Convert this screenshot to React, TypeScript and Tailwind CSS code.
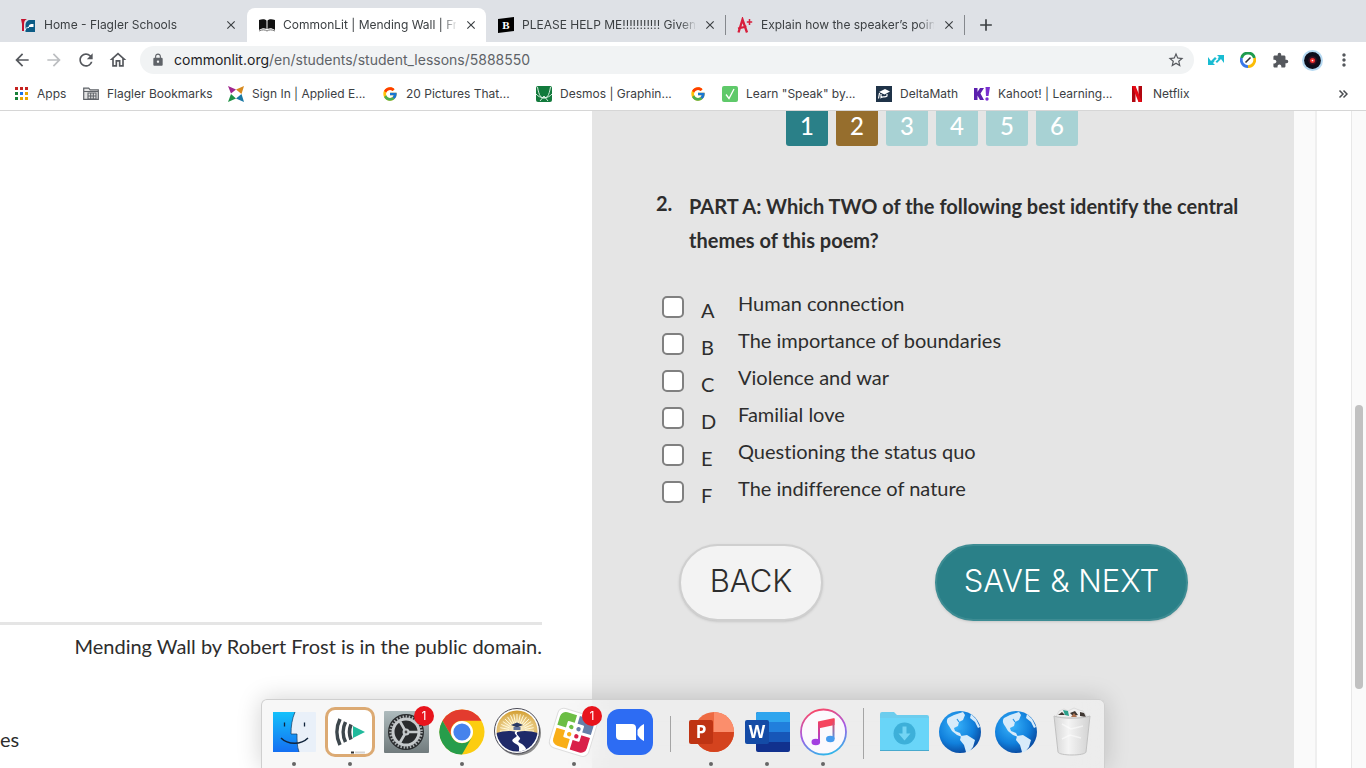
import { ReactNode, useState } from "react";
import {
  MdAdd,
  MdArrowBack,
  MdArrowForward,
  MdClose,
  MdExtension,
  MdLock,
  MdMoreVert,
  MdOutlineHome,
  MdRefresh,
  MdStarBorder,
} from "react-icons/md";
import { FcGoogle } from "react-icons/fc";

interface TabItem {
  title: string;
  icon: ReactNode;
  active?: boolean;
  divider?: boolean;
}

interface BookmarkItem {
  label: string;
  icon: ReactNode;
  width: string;
}

interface DockItem {
  label: string;
  icon: ReactNode;
  running?: boolean;
  badge?: string;
}

/* ---------- small icons ---------- */

const FlaglerIcon = () => (
  <svg viewBox="0 0 16 16" className="size-4 shrink-0">
    <path d="M1 2h6C4.500 3 4 5 4 8v6H2V7z" fill="#c4122f" />
    <path d="M5.500 15V8c0-3 2-5 5-5H15v12z" fill="#0d5c86" />
    <path d="M8.500 10C9 7.500 10 7 13.500 7v3z" fill="#fff" />
    <path d="M5 13c.5-2 2-2.500 4-2.500" fill="none" stroke="#fff" />
  </svg>
);

const BookIcon = () => (
  <svg viewBox="0 0 16 16" className="size-4 shrink-0">
    <path d="M0 13V3c3-1 6-1 7.500.5V12C5.500 11 3 11 0 13zM16 13V3c-3-1-6-1-7.500.5V12c2-1 4.500-1 7.500 1z" fill="#111" />
    <path d="M0 14c3-1.500 6-1.500 8 0 2-1.500 5-1.500 8 0" fill="none" stroke="#777" />
  </svg>
);

const BrainlyIcon = () => (
  <svg viewBox="0 0 16 16" className="size-4 shrink-0">
    <path d="M0 2l16-2v14L0 16z" fill="#000" />
    <text x="8" y="12" textAnchor="middle" fontSize="11" fontWeight="900" fontFamily="Liberation Serif, serif" fill="#fff">
      B
    </text>
  </svg>
);

const GradeIcon = () => (
  <svg viewBox="0 0 16 16" className="size-4 shrink-0">
    <path d="M1.500 15.500L5.500 2.500l4.500 13M1 11.500l8.500-2" fill="none" stroke="#d81f3c" strokeWidth="2.300" />
    <path d="M12.500 2v6M9.800 5h5.400" stroke="#d81f3c" strokeWidth="1.500" />
  </svg>
);

const APP_COLORS = ["#c5221f", "#c5221f", "#c5221f", "#188038", "#1a73e8", "#e8a600", "#188038", "#e8a600", "#e8a600"];

const AppsIcon = () => (
  <svg viewBox="0 0 16 16" className="size-4 shrink-0">
    {APP_COLORS.map((color, i) => (
      <rect key={i} x={2 + (i % 3) * 5} y={1 + Math.floor(i / 3) * 5} width="3" height="3" fill={color} />
    ))}
  </svg>
);

const FolderGridIcon = () => (
  <svg viewBox="0 0 16 16" className="size-4 shrink-0">
    <path d="M.7 13.300V2.200h5l1.500 1.600h8.100v9.500z" fill="#e4e4e4" stroke="#5f6368" strokeWidth="1.200" />
    <path d="M1 5.500h14" stroke="#5f6368" />
    <path d="M5 7h8v6H5zM5 10h8M7.700 7v6M10.300 7v6" fill="none" stroke="#5f6368" strokeWidth="1.100" />
  </svg>
);

const SignInIcon = () => (
  <svg viewBox="0 0 16 16" className="size-4 shrink-0">
    <path d="M0 0l8 3.500-5 4z" fill="#a0268f" />
    <path d="M16 0l-2.500 8L8 3.500z" fill="#d78a1f" />
    <path d="M0 16l3-8 5 4.500z" fill="#1e9245" />
    <path d="M16 16l-8-3.500 5.500-4.500z" fill="#1978a5" />
  </svg>
);

const DesmosIcon = () => (
  <svg viewBox="0 0 16 16" className="size-4 shrink-0">
    <rect width="16" height="16" rx="2" fill="#127a3c" />
    <path d="M1.500 1c1.500 9 3.500 11 6.500 11s5-2 6.500-11M0 8c4 5 12 5 16 0M4 15l4-5 4 5" fill="none" stroke="#e9f6ee" strokeWidth=".9" />
  </svg>
);

const CheckIcon = () => (
  <svg viewBox="0 0 16 16" className="size-4 shrink-0">
    <rect width="16" height="16" rx="2" fill="#5fc96a" />
    <path d="M4 8.500l3 4L12 3" fill="none" stroke="#fff" strokeWidth="1.300" />
  </svg>
);

const DeltaIcon = () => (
  <svg viewBox="0 0 16 16" className="size-4 shrink-0">
    <rect width="16" height="16" fill="#1f3348" />
    <path d="M3 6l6-3 5 2.500-5.500 3z" fill="#fff" />
    <path d="M5 8v3.500c2-1.500 4 .5 6-1.500V8M3.500 7L2.500 12.500" fill="none" stroke="#fff" strokeWidth="1.200" />
  </svg>
);

const KahootIcon = () => (
  <svg viewBox="0 0 16 16" className="size-4 shrink-0">
    <path d="M0 2h3.500v4L6 2h4L6.500 7.500 10 14H6L3.500 9.500V14H0z" fill="#5b1fae" />
    <path d="M11.500 1H16l-1.500 9H12z" fill="#7a2fd0" />
    <circle cx="13" cy="13" r="1.700" fill="#7a2fd0" />
  </svg>
);

const NetflixIcon = () => (
  <svg viewBox="0 0 16 16" className="size-4 shrink-0">
    <path d="M3 0h3.500v16H3zM9.500 0H13v16H9.500z" fill="#b1060f" />
    <path d="M3 0h3.500L13 16H9.500z" fill="#e50914" />
  </svg>
);

const ArrowsIcon = () => (
  <svg viewBox="0 0 16 16" className="size-4">
    <path d="M0 5v8h7l-2-2 4-4-2-2-4 4zM16 11V3H9l2 2-4 4 2 2 4-4z" fill="#19bcd2" />
    <path d="M6.500 9.500l3.500-3" stroke="#fff" strokeWidth="1.600" />
  </svg>
);

const MeterIcon = () => (
  <svg viewBox="0 0 16 16" className="size-4">
    <g fill="none" strokeWidth="2.800">
      <path d="M1.600 6A6.600 6.600 0 0 1 14.400 6" stroke="#1e9b4e" />
      <path d="M14.400 6A6.600 6.600 0 0 1 8 14.600" stroke="#fbbc05" />
      <path d="M8 14.600A6.600 6.600 0 0 1 1.600 6" stroke="#3b78e7" />
    </g>
    <path d="M5.500 10.500l5-5" stroke="#333" strokeWidth="1.600" />
  </svg>
);

const AvatarIcon = () => (
  <svg viewBox="0 0 20 20" className="size-[21px]">
    <circle cx="10" cy="10" r="10" fill="#b5d9f2" />
    <circle cx="10" cy="10" r="8" fill="#0c0d1b" />
    <circle cx="10" cy="10" r="4" fill="#3a1022" />
    <circle cx="10" cy="10" r="2.400" fill="#f0302f" />
    <circle cx="10" cy="10" r=".8" fill="#fff" />
  </svg>
);

const ChevronsIcon = () => (
  <svg viewBox="0 0 10 10" className="size-[10px]">
    <path d="M1.500 1.500L5 5 1.500 8.500M5.500 1.500L9 5 5.500 8.500" fill="none" stroke="#4a4d51" strokeWidth="1.500" />
  </svg>
);

/* ---------- dock icons ---------- */

const dockSvg = "size-12 overflow-visible";

const FinderIcon = () => (
  <svg viewBox="0 0 48 48" className={dockSvg}>
    <defs>
      <linearGradient id="finder" x1="0" y1="0" x2="0" y2="1">
        <stop offset="0" stopColor="#14c1fb" />
        <stop offset="1" stopColor="#146ff2" />
      </linearGradient>
    </defs>
    <rect x="3" y="4" width="43" height="40" rx="1" fill="#e9f0f9" />
    <path d="M3 4h22c-3 7-4 14-4 22h6c0 7 0 12 2 18H3z" fill="url(#finder)" />
    <path d="M25 4c-3 7-4 14-4 22h6c0 7 0 12 2 18" fill="none" stroke="#143b62" strokeWidth=".7" />
    <path d="M14.500 14.500v4M34.500 14.500v4" stroke="#10243c" strokeWidth="1.300" />
    <path d="M11 30c7 7 20 7 27 0" fill="none" stroke="#10243c" strokeWidth="1.500" />
  </svg>
);

const CastIcon = () => (
  <svg viewBox="0 0 48 48" className={dockSvg}>
    <rect x="-1" y="-1" width="50" height="50" rx="10" fill="#dcaa73" />
    <rect x="2" y="2" width="44" height="44" rx="7" fill="#fff" />
    <g fill="none" stroke="#3d474d" strokeWidth="3.600">
      <path d="M14 11c-4 8-4 18 0 26" />
      <path d="M19.500 14c-3 6-3 14 0 20" />
      <path d="M25 16.500c-2 5-2 10 0 15" />
    </g>
    <path d="M27 18l12 6-12 6z" fill="#20ba9c" />
    <path d="M25 44.500h3" stroke="#333" strokeWidth="2" />
    <path d="M29 44.500h10" stroke="#d5d5d5" strokeWidth="2" />
  </svg>
);

const SettingsIcon = () => (
  <svg viewBox="0 0 48 48" className={dockSvg}>
    <defs>
      <linearGradient id="steel" x1="0" y1="0" x2="0" y2="1">
        <stop offset="0" stopColor="#aebbbd" />
        <stop offset="1" stopColor="#717b7d" />
      </linearGradient>
    </defs>
    <rect x="2" y="3" width="45" height="42" rx="1" fill="url(#steel)" />
    <circle cx="24" cy="24" r="18" fill="#292b2d" />
    <circle cx="24" cy="24" r="15.500" fill="none" stroke="#aaafb1" strokeWidth="2.500" strokeDasharray="1.500 1.640" />
    <circle cx="24" cy="24" r="13" fill="none" stroke="#c5c9cb" strokeWidth="3" />
    <path d="M24 24h12M24 24l-6-10.500M24 24l-6 10.500" stroke="#c5c9cb" strokeWidth="2.600" />
    <circle cx="24" cy="24" r="3.500" fill="#c5c9cb" />
    <circle cx="24" cy="24" r="1.400" fill="#444" />
  </svg>
);

const ChromeIcon = () => (
  <svg viewBox="0 0 48 48" className={dockSvg}>
    <circle cx="24" cy="24" r="22.500" fill="#fccd10" />
    <path d="M4.500 12.700A22.500 22.500 0 0 1 43.500 12.700H24a11.300 11.300 0 0 0-9.800 17z" fill="#e33b2e" />
    <path d="M4.500 12.700A22.500 22.500 0 0 0 24 46.500l9.800-16.900a11.300 11.300 0 0 1-19.600 0z" fill="#279d4b" />
    <circle cx="24" cy="24" r="11" fill="#fff" />
    <circle cx="24" cy="24" r="8.600" fill="#4683ec" />
  </svg>
);

const SUN_RAYS = Array.from({ length: 17 }, (_, i) => (Math.PI * i) / 16);

const SchoolIcon = () => (
  <svg viewBox="0 0 48 48" className={dockSvg}>
    <defs>
      <clipPath id="school">
        <circle cx="23" cy="23" r="20.500" />
      </clipPath>
      <radialGradient id="sun" cx=".5" cy=".75" r=".8">
        <stop offset="0" stopColor="#fff9df" />
        <stop offset="1" stopColor="#cd9219" />
      </radialGradient>
    </defs>
    <circle cx="24.500" cy="25" r="22.500" fill="#444" opacity=".6" />
    <circle cx="23" cy="23" r="22.500" fill="#fff" stroke="#4a4a55" />
    <g clipPath="url(#school)">
      <rect x="2" y="2" width="42" height="25" fill="url(#sun)" />
      {SUN_RAYS.map((a, i) => (
        <line key={i} x1={23 + Math.cos(a) * 8} y1={23 - Math.sin(a) * 8} x2={23 + Math.cos(a) * 17} y2={23 - Math.sin(a) * 17} stroke="#fff8d8" />
      ))}
      <path d="M2 25c8-2 13-3 21-1 7-2 14-1 21 1v21H2z" fill="#1f2a69" />
      <path d="M22 23c-4 3 3 4 0 6-5 3-5 4 0 7 4 2 3 4 3 8h8c-1-5-3-7-7-9-4-2 1-3 0-5-2-3-5-4-2-7z" fill="#fff" />
    </g>
    <path d="M17 17l6-2.500 6 2.500-6 2.500z" fill="#2a3a64" />
    <path d="M19.500 19v3h7v-3" fill="#60729b" />
  </svg>
);

const CleverIcon = () => (
  <svg viewBox="0 0 48 48" className={dockSvg}>
    <g transform="rotate(17 24 24)">
      <rect x="3" y="4" width="41" height="41" rx="6" fill="#fff" stroke="#dedede" />
      <path d="M12 7h10v15H6v-9a6 6 0 0 1 6-6z" fill="#6cbe45" />
      <path d="M25 7h10a6 6 0 0 1 6 6v9H25z" fill="#667fa9" />
      <path d="M6 25h16v17H12a6 6 0 0 1-6-6z" fill="#f9ae17" />
      <path d="M25 25h16v11a6 6 0 0 1-6 6H25z" fill="#d92049" />
      <rect x="15" y="15" width="17" height="17" rx="1" fill="#fff" />
      <circle cx="20" cy="20" r="2.200" fill="#6cbe45" />
      <circle cx="27.500" cy="20" r="2.200" fill="#667fa9" />
      <circle cx="20" cy="27.500" r="2.200" fill="#f9ae17" />
      <circle cx="27.500" cy="27.500" r="2.200" fill="#d92049" />
    </g>
  </svg>
);

const ZoomIcon = () => (
  <svg viewBox="0 0 48 48" className={dockSvg}>
    <rect x="1" y="1" width="46" height="46" rx="12" fill="#2d6cf3" />
    <path d="M10 16h16a4 4 0 0 1 4 4v12H14a4 4 0 0 1-4-4zM31.500 22c2-3 4-5 6.500-6v17c-2.500-1-4.500-3-6.500-6z" fill="#fff" />
  </svg>
);

const PowerPointIcon = () => (
  <svg viewBox="0 0 48 48" className={dockSvg}>
    <circle cx="27" cy="24" r="20" fill="#ee6a42" />
    <path d="M27 4a20 20 0 0 1 20 20H27z" fill="#fb8e6c" />
    <path d="M7 24h40a20 20 0 0 1-40 0z" fill="#d4431e" />
    <rect x="2" y="12" width="24" height="24" rx="2" fill="#bf3413" />
    <text x="14" y="30" textAnchor="middle" fontSize="17" fontWeight="700" fontFamily="Open Sans, sans-serif" fill="#fff">
      P
    </text>
  </svg>
);

const WordIcon = () => (
  <svg viewBox="0 0 48 48" className={dockSvg}>
    <rect x="13" y="4" width="34" height="40" rx="2" fill="#11318e" />
    <path d="M15 4h30a2 2 0 0 1 2 2v8H13V6a2 2 0 0 1 2-2z" fill="#2fa5ee" />
    <path d="M13 14h34v10H13z" fill="#217fdc" />
    <path d="M13 24h34v10H13z" fill="#1757b8" />
    <rect x="2" y="12" width="24" height="24" rx="2" fill="#144ba6" />
    <text x="14" y="30" textAnchor="middle" fontSize="17" fontWeight="700" fontFamily="Open Sans, sans-serif" fill="#fff">
      W
    </text>
  </svg>
);

const MusicIcon = () => (
  <svg viewBox="0 0 48 48" className={dockSvg}>
    <defs>
      <linearGradient id="ring" x1=".3" y1="0" x2=".6" y2="1">
        <stop offset="0" stopColor="#fb4866" />
        <stop offset=".5" stopColor="#a45ae6" />
        <stop offset="1" stopColor="#31b5e9" />
      </linearGradient>
      <linearGradient id="stemLeft" gradientUnits="userSpaceOnUse" x1="0" y1="12" x2="0" y2="34">
        <stop offset="0" stopColor="#f74059" />
        <stop offset="1" stopColor="#a33fe0" />
      </linearGradient>
      <linearGradient id="stemRight" gradientUnits="userSpaceOnUse" x1="0" y1="12" x2="0" y2="32">
        <stop offset="0" stopColor="#f74059" />
        <stop offset="1" stopColor="#469bee" />
      </linearGradient>
    </defs>
    <circle cx="24.500" cy="24" r="22.500" fill="#fbf9fd" stroke="url(#ring)" strokeWidth="1.800" />
    <path d="M19 13.500L35.500 10v7L19 20.500z" fill="#f5455e" />
    <path d="M19 14h2v20h-2z" fill="url(#stemLeft)" />
    <path d="M33.500 11h2v20h-2z" fill="url(#stemRight)" />
    <ellipse cx="16.800" cy="34" rx="4.300" ry="3.200" fill="#a33fe0" />
    <ellipse cx="31.300" cy="31" rx="4.300" ry="3.200" fill="#469bee" />
  </svg>
);

const DownloadsIcon = () => (
  <svg viewBox="0 0 48 48" className={dockSvg}>
    <path d="M0 6a2 2 0 0 1 2-2h12l3 3h30a2 2 0 0 1 2 2v33H0z" fill="#6ccdee" />
    <path d="M0 10h49v31a2 2 0 0 1-2 2H2a2 2 0 0 1-2-2z" fill="#69d5f8" />
    <path d="M0 42.500h49" stroke="#48a9cd" />
    <circle cx="24.500" cy="25.500" r="11" fill="#3db0d9" />
    <path d="M24.500 18.500v8" stroke="#73d5f4" strokeWidth="4" />
    <path d="M18.500 25.500h12l-6 7z" fill="#73d5f4" />
  </svg>
);

const GlobeIcon = () => (
  <svg viewBox="0 0 48 48" className={dockSvg}>
    <defs>
      <radialGradient id="ocean" cx=".4" cy=".35" r=".65">
        <stop offset="0" stopColor="#39b4fb" />
        <stop offset=".65" stopColor="#1180dc" />
        <stop offset="1" stopColor="#0a4fa6" />
      </radialGradient>
    </defs>
    <circle cx="24" cy="24" r="21" fill="url(#ocean)" />
    <g fill="#d7ebfa">
      <path d="M12 10l6-3 9-3 2 3-2 5-4 2-1 4-4 2 1 3 5 2 2 4-5-2-5-4-3-5c-2-3-3-5-1-8z" />
      <path d="M25 28l6-1 8 5-2 7-4 5h-3l-2-7-4-5z" />
      <path d="M35 6l5 5 4 8-2 1-3-6-5-4z" />
    </g>
    <path d="M21 11l2 3M22 23h4" stroke="#2595e9" strokeWidth="1.200" />
  </svg>
);

const TrashIcon = () => (
  <svg viewBox="0 0 48 48" className={dockSvg}>
    <defs>
      <linearGradient id="bin" x1="0" y1="0" x2="1" y2="0">
        <stop offset="0" stopColor="#d6d6d6" />
        <stop offset=".4" stopColor="#f4f4f4" />
        <stop offset="1" stopColor="#d2d2d2" />
      </linearGradient>
    </defs>
    <path d="M8 9l3-6 5-2 4 2 6-3 5 2 4 1 5 7z" fill="#efefef" stroke="#c8c8c8" strokeWidth=".5" />
    <path d="M10 7l4-3 3 3zM22 5l5-2 3 4-5 1zM32 4l4 1 2 4-6-1z" fill="#3f3732" />
    <path d="M15 2l5 1 1 5-4-1z" fill="#2aa18b" />
    <path d="M26 5l3 4h-6zM35 4l2 4" fill="#ae7452" />
    <path d="M6 8c8 3 28 3 36 0l-4 36c-1 4-27 4-28 0z" fill="url(#bin)" stroke="#c0c0c0" />
    <path d="M14 16l9 5 12-3M14 31l8-4 11 3" fill="none" stroke="#fff" strokeWidth="1.500" opacity=".5" />
  </svg>
);

/* ---------- data ---------- */

const tabs: TabItem[] = [
  { title: "Home - Flagler Schools", icon: <FlaglerIcon /> },
  { title: "CommonLit | Mending Wall | Fr", icon: <BookIcon />, active: true },
  { title: "PLEASE HELP ME!!!!!!!!!!! Given", icon: <BrainlyIcon />, divider: true },
  { title: "Explain how the speaker’s poin", icon: <GradeIcon />, divider: true },
];

const bookmarks: BookmarkItem[] = [
  { label: "Apps", icon: <AppsIcon />, width: "w-[54px]" },
  { label: "Flagler Bookmarks", icon: <FolderGridIcon />, width: "w-[129px]" },
  { label: "Sign In | Applied E...", icon: <SignInIcon />, width: "w-[138px]" },
  { label: "20 Pictures That...", icon: <FcGoogle className="size-4 shrink-0" />, width: "w-[138px]" },
  { label: "Desmos | Graphin...", icon: <DesmosIcon />, width: "w-[138px]" },
  { label: "", icon: <FcGoogle className="size-4 shrink-0" />, width: "w-4" },
  { label: 'Learn "Speak" by...', icon: <CheckIcon />, width: "w-[138px]" },
  { label: "DeltaMath", icon: <DeltaIcon />, width: "w-[82px]" },
  { label: "Kahoot! | Learning...", icon: <KahootIcon />, width: "w-[139px]" },
  { label: "Netflix", icon: <NetflixIcon />, width: "w-[62px]" },
];

const answers = [
  { letter: "A", text: "Human connection" },
  { letter: "B", text: "The importance of boundaries" },
  { letter: "C", text: "Violence and war" },
  { letter: "D", text: "Familial love" },
  { letter: "E", text: "Questioning the status quo" },
  { letter: "F", text: "The indifference of nature" },
];

const dockApps: DockItem[] = [
  { label: "Finder", icon: <FinderIcon />, running: true },
  { label: "Screencastify", icon: <CastIcon />, running: true },
  { label: "System Preferences", icon: <SettingsIcon />, badge: "1" },
  { label: "Chrome", icon: <ChromeIcon />, running: true },
  { label: "School", icon: <SchoolIcon /> },
  { label: "Self Service", icon: <CleverIcon />, running: true, badge: "1" },
  { label: "Zoom", icon: <ZoomIcon /> },
];

const dockOffice: DockItem[] = [
  { label: "PowerPoint", icon: <PowerPointIcon />, running: true },
  { label: "Word", icon: <WordIcon />, running: true },
  { label: "iTunes", icon: <MusicIcon />, running: true },
];

const dockPlaces: DockItem[] = [
  { label: "Downloads", icon: <DownloadsIcon /> },
  { label: "Website", icon: <GlobeIcon /> },
  { label: "Website 2", icon: <GlobeIcon /> },
  { label: "Trash", icon: <TrashIcon /> },
];

/* ---------- parts ---------- */

const Tab = ({ title, icon, active, divider }: TabItem) => (
  <div className={`flex h-[34px] w-[239px] items-center pl-3 ${active ? "rounded-t-lg bg-white" : ""}`}>
    {icon}
    <span className="ml-2 w-[173px] whitespace-nowrap text-xs text-[#3c4043] [mask-image:linear-gradient(to_right,#000_158px,transparent_175px)]">
      {title}
    </span>
    <button type="button" aria-label={`Close ${title}`} className="ml-auto px-2 text-[#3c4043]">
      <MdClose className="size-[14px]" />
    </button>
    <div className={`h-5 w-px shrink-0 ${divider ? "bg-[#85888d]" : ""}`} />
  </div>
);

const ToolButton = ({ label, children }: { label: string; children: ReactNode }) => (
  <button type="button" aria-label={label} className="flex h-7 w-8 items-center justify-center text-[#55585d]">
    {children}
  </button>
);

const DockButton = ({ label, icon, running, badge }: DockItem) => (
  <button type="button" aria-label={label} className="relative flex w-12 flex-col items-center">
    {icon}
    {badge && (
      <span className="absolute -top-0.5 left-8 flex size-5 items-center justify-center rounded-full bg-[#e8141c] text-xs text-white">
        {badge}
      </span>
    )}
    {running && <span className="mt-1.5 size-1 rounded-full bg-[#666]" />}
  </button>
);

const BrowserHeader = () => {
  const [url, setUrl] = useState("commonlit.org/en/students/student_lessons/5888550");
  const slash = url.indexOf("/");

  return (
    <header className="shrink-0 border-b border-[#d6d6d6] bg-white font-[Inter,sans-serif]">
      <div className="flex h-[42px] items-end bg-[#dee1e6] pl-2">
        {tabs.map((tab) => (
          <Tab key={tab.title} {...tab} />
        ))}
        <button type="button" aria-label="New tab" className="ml-3 flex h-[34px] items-center text-[#3c4043]">
          <MdAdd className="size-5" />
        </button>
      </div>
      <div className="flex h-9 items-center px-1.5">
        <ToolButton label="Back">
          <MdArrowBack className="size-5" />
        </ToolButton>
        <ToolButton label="Forward">
          <MdArrowForward className="size-5 text-[#bcbec1]" />
        </ToolButton>
        <ToolButton label="Reload">
          <MdRefresh className="size-5" />
        </ToolButton>
        <ToolButton label="Home">
          <MdOutlineHome className="size-5" />
        </ToolButton>
        <div className="mx-1.5 flex h-7 flex-1 items-center rounded-full bg-[#f1f3f4] pl-[11px] pr-1">
          <MdLock className="size-[14px] text-[#5f6368]" />
          <label className="relative ml-[9px] flex-1 text-sm">
            <span className="whitespace-nowrap text-[#5f6368]" aria-hidden="true">
              <span className="text-[#202124]">{url.slice(0, slash)}</span>
              {url.slice(slash)}
            </span>
            <input
              aria-label="Address"
              className="absolute inset-0 w-full bg-transparent text-transparent caret-black outline-none"
              value={url}
              onChange={(e) => setUrl(e.target.value)}
            />
          </label>
          <button type="button" aria-label="Bookmark" className="px-[5px] text-[#55585d]">
            <MdStarBorder className="size-[18px]" />
          </button>
        </div>
        <ToolButton label="Sync">
          <ArrowsIcon />
        </ToolButton>
        <ToolButton label="Meter">
          <MeterIcon />
        </ToolButton>
        <ToolButton label="Extensions">
          <MdExtension className="size-[17px]" />
        </ToolButton>
        <ToolButton label="Profile">
          <AvatarIcon />
        </ToolButton>
        <ToolButton label="Menu">
          <MdMoreVert className="size-5" />
        </ToolButton>
      </div>
      <nav className="flex h-8 items-center gap-4 pl-[13px] pr-[18px] text-xs text-[#3c4043]">
        {bookmarks.map((item, i) => (
          <a key={i} href="#" aria-label={item.label || "Google"} className={`flex items-center gap-2 whitespace-nowrap ${item.width}`}>
            {item.icon}
            {item.label}
          </a>
        ))}
        <button type="button" className="ml-auto" aria-label="More bookmarks">
          <ChevronsIcon />
        </button>
      </nav>
    </header>
  );
};

const QuestionPanel = () => {
  const [checked, setChecked] = useState<string[]>([]);

  const toggle = (letter: string) => {
    setChecked(checked.includes(letter) ? checked.filter((c) => c !== letter) : [...checked, letter]);
  };

  return (
    <main className="flex-1 bg-[#e5e5e5] pl-16 pr-12">
      <nav className="flex justify-center gap-2 pr-[38px] text-2xl font-medium text-white">
        {[1, 2, 3, 4, 5, 6].map((n) => (
          <button
            key={n}
            type="button"
            className={`flex h-[35px] w-[42px] items-start justify-center rounded-b-[3px] leading-[29px] ${
              n === 1 ? "bg-[#2a8088]" : n === 2 ? "bg-[#966e2d]" : "bg-[#a8d2d4]"
            }`}
          >
            {n}
          </button>
        ))}
      </nav>
      <div className="mt-[43px] flex font-bold">
        <span className="w-[33px] leading-7">2.</span>
        <h1 className="flex-1 leading-[34px]">PART A: Which TWO of the following best identify the central themes of this poem?</h1>
      </div>
      <div className="mt-[31px]">
        {answers.map(({ letter, text }) => (
          <label key={letter} className="flex h-[37px] items-start pl-1.5">
            <input
              type="checkbox"
              className="mt-2 size-[22px] appearance-none rounded-[5px] border-2 border-[#808080] bg-white checked:bg-[#2a8088]"
              checked={checked.includes(letter)}
              onChange={() => toggle(letter)}
            />
            <span className="ml-[17px] mt-[7px] w-[37px] leading-[30px]">{letter}</span>
            <span className="leading-[30px]">{text}</span>
          </label>
        ))}
      </div>
      <div className="mt-[34px] flex justify-between pl-[23px] pr-[58px] font-[Inter,sans-serif] text-[31px] font-light">
        <button type="button" className="h-[77px] w-36 rounded-full border-2 border-[#cfcfcf] bg-[#f3f3f3] pb-1 shadow-sm">
          BACK
        </button>
        <button type="button" className="h-[77px] w-[253px] rounded-full border-2 border-[#3d8c93] bg-[#2a8088] pb-1 text-white shadow-sm">
          SAVE &amp; NEXT
        </button>
      </div>
    </main>
  );
};

const Dock = () => (
  <div className="absolute bottom-0 left-1/2 flex h-[69px] -translate-x-1/2 items-start gap-2 rounded-t-md border border-b-0 border-[#cfcfcf] bg-[#f1f1f1]/60 px-2 pt-2 font-[Inter,sans-serif] shadow-[0_0_24px_rgba(0,0,0,0.18)] backdrop-blur-lg">
    {dockApps.map((item) => (
      <DockButton key={item.label} {...item} />
    ))}
    <div className="flex w-[17px] justify-center pt-2">
      <div className="h-9 w-px bg-[#a5a5a5]" />
    </div>
    {dockOffice.map((item) => (
      <DockButton key={item.label} {...item} />
    ))}
    <div className="flex w-[17px] justify-center">
      <div className="h-[51px] w-px bg-[#a5a5a5]" />
    </div>
    {dockPlaces.map((item) => (
      <DockButton key={item.label} {...item} />
    ))}
  </div>
);

const App = () => {
  return (
    <div className="relative flex h-screen flex-col overflow-hidden bg-white">
      <BrowserHeader />
      <div className="flex min-h-0 flex-1 overflow-hidden font-[Lato,sans-serif] text-xl text-[#2d2d2d] [font-variant-ligatures:none]">
        <section className="flex w-[592px] flex-col justify-end pb-[15px]">
          <div className="mr-[50px] border-t-3 border-[#e5e5e5] pt-[7px] text-right">
            Mending Wall by Robert Frost is in the public domain.
          </div>
          <p className="mt-[65px]">es</p>
        </section>
        <QuestionPanel />
        <div className="w-[23px] border-r-2 border-[#efefef] bg-[#fafafa]" />
        <div className="w-[34px]" />
        <div className="flex w-[15px] flex-col border-l border-[#e8e8e8] bg-[#fafafa] px-[3px]">
          <div className="mt-[294px] h-[284px] w-2 rounded-full bg-[#c1c1c1]" />
        </div>
      </div>
      <Dock />
    </div>
  );
};

export default App;
